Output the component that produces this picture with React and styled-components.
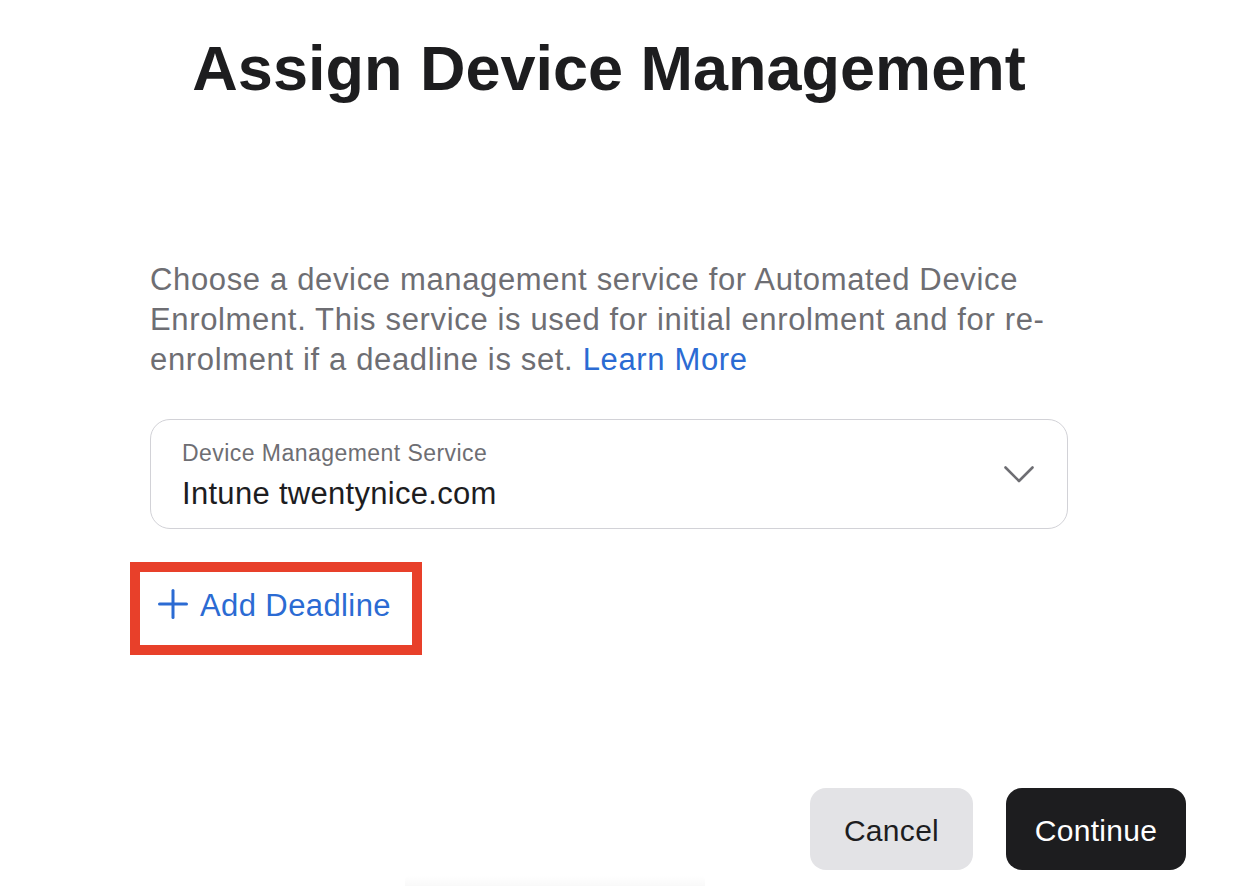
import React from "react";
import styled, { createGlobalStyle } from "styled-components";

const GlobalStyle = createGlobalStyle`
  html, body {
    margin: 0;
    padding: 0;
    background: #ffffff;
    overflow: hidden;
  }
  body {
    font-family: "Liberation Sans", Arial, sans-serif;
    color: #1d1d1f;
  }
  * { box-sizing: border-box; }
`;

const Page = styled.div`
  width: 1234px;
  height: 886px;
  display: flex;
  flex-direction: column;
  padding: 30px 48px 0 150px;
`;

const Column = styled.div`
  width: 918px;
  display: flex;
  flex-direction: column;
  align-items: flex-start;
`;

const Title = styled.h1`
  align-self: stretch;
  margin: 0;
  text-align: center;
  font-size: 63px;
  line-height: 76px;
  font-weight: 700;
  color: #1d1d1f;
  letter-spacing: 0;
`;

const Description = styled.p`
  margin: 154px 0 0;
  font-size: 31px;
  line-height: 40px;
  letter-spacing: 0.65px;
  color: #6e6e73;
`;

const Link = styled.a`
  color: #2b6bd3;
  text-decoration: none;
`;

const Select = styled.div`
  margin-top: 39px;
  width: 918px;
  height: 110px;
  border: 1.5px solid #d2d2d7;
  border-radius: 20px;
  display: flex;
  align-items: center;
  justify-content: space-between;
  padding: 0 33px 0 31px;
`;

const SelectText = styled.div`
  display: flex;
  flex-direction: column;
  padding-top: 2px;
`;

const SelectLabel = styled.span`
  font-size: 23px;
  line-height: 28px;
  letter-spacing: 0.45px;
  color: #6e6e73;
  margin-bottom: 9px;
`;

const SelectValue = styled.span`
  font-size: 31px;
  line-height: 36px;
  letter-spacing: 0.3px;
  color: #1d1d1f;
`;

const AddButton = styled.button`
  margin: 43px 0 0 -10px;
  width: 272px;
  height: 73px;
  display: flex;
  align-items: center;
  gap: 12px;
  padding: 0 0 6px 18px;
  border: none;
  background: #ffffff;
  outline: 10px solid #e8402a;
  font-family: "Liberation Sans", Arial, sans-serif;
  font-size: 31px;
  letter-spacing: 0.4px;
  color: #2b6bd3;
  cursor: pointer;
`;

const PlusIcon = styled.svg`
  flex: none;
  margin-bottom: 4px;
`;

const Actions = styled.div`
  margin-top: 143px;
  display: flex;
  justify-content: flex-end;
  gap: 33px;
`;

const ActionButton = styled.button`
  height: 82px;
  width: ${(p) => p.$width}px;
  border: none;
  border-radius: 16px;
  padding: 4px 0 0;
  font-family: "Liberation Sans", Arial, sans-serif;
  font-size: 30px;
  letter-spacing: 0.3px;
  background: ${(p) => (p.$primary ? "#1d1d1f" : "#e3e3e6")};
  color: ${(p) => (p.$primary ? "#ffffff" : "#1d1d1f")};
  cursor: pointer;
`;

const BottomShade = styled.div`
  margin: 5px 0 0 255px;
  width: 300px;
  height: 11px;
  background: linear-gradient(to bottom, rgba(0, 0, 0, 0) 0%, rgba(0, 0, 0, 0.025) 100%);
  border-radius: 6px 6px 0 0;
`;

const Chevron = () => (
  <svg width="30" height="17" viewBox="0 0 30 17" fill="none">
    <polyline
      points="1.5,1.5 15,15 28.5,1.5"
      stroke="#6e6e73"
      strokeWidth="2.6"
      strokeLinecap="round"
      strokeLinejoin="round"
    />
  </svg>
);

const Plus = () => (
  <PlusIcon width="30" height="30" viewBox="0 0 30 30" fill="none">
    <line x1="15" y1="1.5" x2="15" y2="28.5" stroke="#2b6bd3" strokeWidth="3" strokeLinecap="round" />
    <line x1="1.5" y1="15" x2="28.5" y2="15" stroke="#2b6bd3" strokeWidth="3" strokeLinecap="round" />
  </PlusIcon>
);

export default function App() {
  return (
    <>
      <GlobalStyle />
      <Page>
        <Column>
          <Title>Assign Device Management</Title>
          <Description>
            Choose a device management service for Automated Device Enrolment. This service is used
            for initial enrolment and for re-enrolment if a deadline is set.{" "}
            <Link href="#">Learn More</Link>
          </Description>
          <Select>
            <SelectText>
              <SelectLabel>Device Management Service</SelectLabel>
              <SelectValue>Intune twentynice.com</SelectValue>
            </SelectText>
            <Chevron />
          </Select>
          <AddButton>
            <Plus />
            Add Deadline
          </AddButton>
        </Column>
        <Actions>
          <ActionButton $width={163}>Cancel</ActionButton>
          <ActionButton $width={180} $primary>
            Continue
          </ActionButton>
        </Actions>
        <BottomShade />
      </Page>
    </>
  );
}
